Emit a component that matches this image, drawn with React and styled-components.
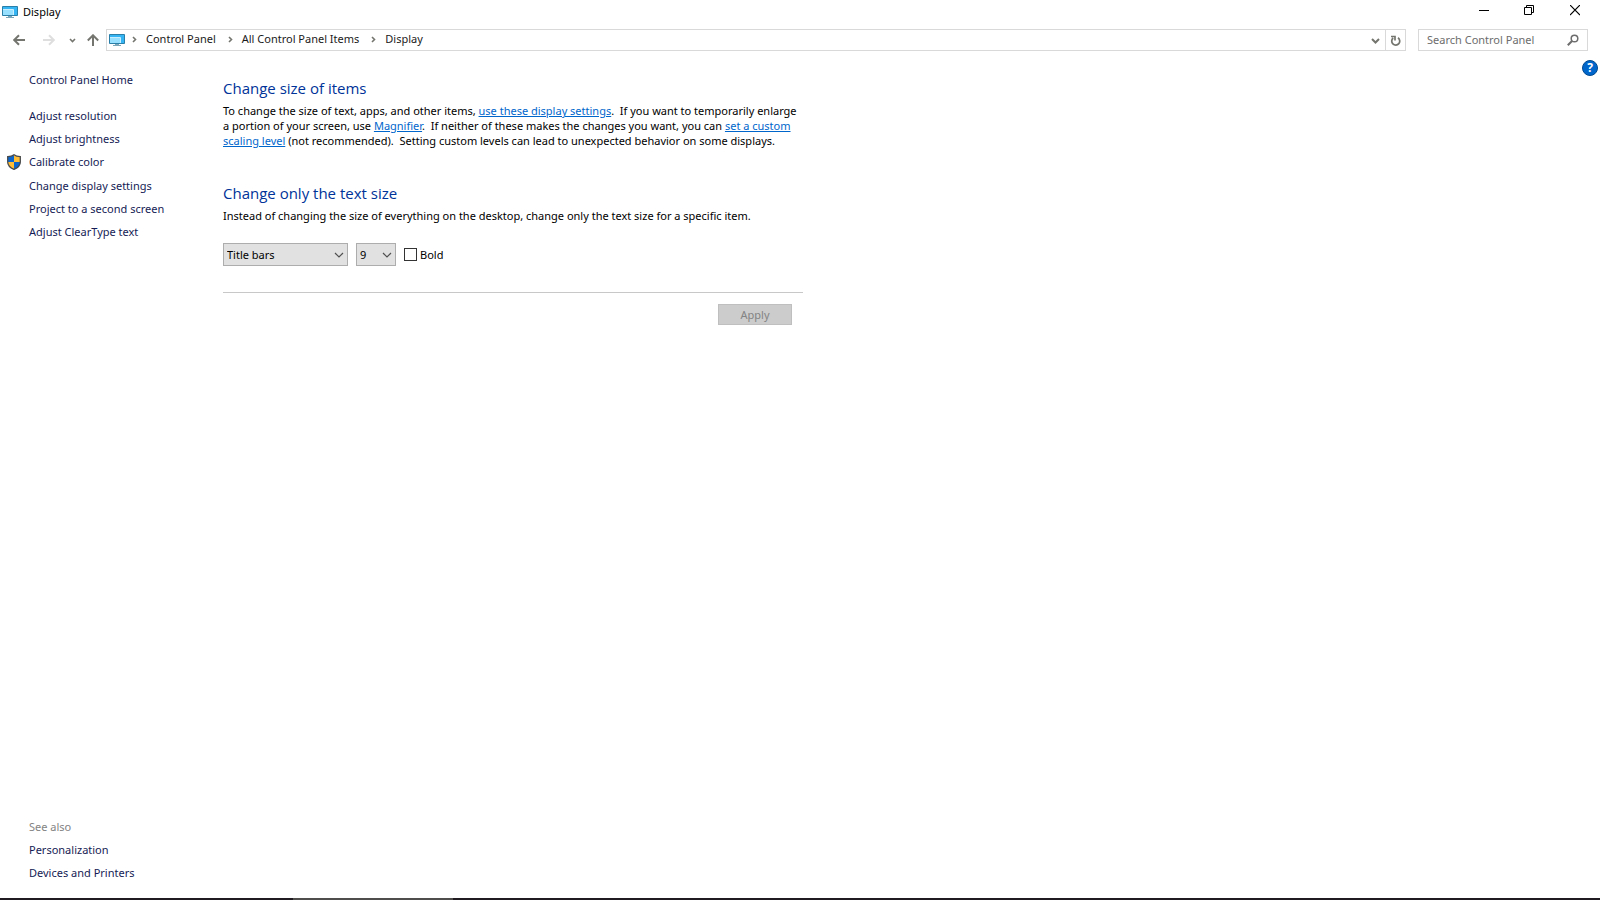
import { useState } from 'react';
import styled, { createGlobalStyle } from 'styled-components';

const GlobalStyle = createGlobalStyle`
    * {
        box-sizing: border-box;
    }

    body {
        margin: 0;
        background: #fff;
        color: #000;
        font: 11px/16px 'Noto Sans', 'Open Sans', sans-serif;
    }

    button, input, select {
        font: inherit;
        color: inherit;
    }
`;

const Window = styled.div`
    display: flex;
    flex-direction: column;
    min-height: 100vh;
`;

const TitleBar = styled.header`
    display: flex;
    align-items: center;
    height: 24px;
    padding: 0 2px;
`;

const Title = styled.h1`
    flex: 1;
    margin: 0 0 0 5px;
    font-size: 11px;
    font-weight: 400;
`;

const IconButton = styled.button`
    display: flex;
    flex: none;
    align-items: center;
    justify-content: center;
    width: ${({ $width }) => $width}px;
    height: 20px;
    padding: 0;
    border: 0;
    background: transparent;
`;

const Toolbar = styled.nav`
    display: flex;
    align-items: center;
    height: 32px;
    padding: 0 12px 0 4px;
`;

const AddressBar = styled.div`
    display: flex;
    flex: 1;
    align-items: center;
    height: 22px;
    margin-left: 1px;
    padding-left: 2px;
    border: 1px solid #d9d9d9;
`;

const Crumbs = styled.ol`
    display: flex;
    flex: 1;
    margin: 0;
    padding: 0 0 2px;
    list-style: none;
`;

const Crumb = styled.li`
    display: flex;
    align-items: center;

    svg {
        margin: 0 9px 0 7px;
    }

    & + & svg {
        margin-left: 12px;
    }

    a {
        color: #1a1a1a;
        text-decoration: none;
    }
`;

const Refresh = styled.div`
    height: 20px;
    border-left: 1px solid #d9d9d9;
`;

const SearchBox = styled.label`
    display: flex;
    align-items: center;
    width: 170px;
    height: 22px;
    margin-left: 12px;
    padding: 0 8px;
    border: 1px solid #d9d9d9;

    input {
        flex: 1;
        min-width: 0;
        padding: 0;
        border: 0;
        outline: 0;
        background: transparent;
    }

    input::placeholder {
        color: #6d6d6d;
        opacity: 1;
    }
`;

const Body = styled.div`
    display: flex;
    flex: 1;
`;

const Sidebar = styled.aside`
    display: flex;
    flex: none;
    flex-direction: column;
    width: 223px;
    padding: 12px 0 14px 6px;
`;

const LinkList = styled.ul`
    margin: ${({ $bottom }) => ($bottom ? 'auto 0 0' : '13px 0 0')};
    padding: 0;
    list-style: none;
`;

const SideItem = styled.div`
    display: flex;
    align-items: center;
    height: ${({ $tall }) => ($tall ? 24 : 23)}px;
    color: #838383;

    a {
        color: #151c55;
        text-decoration: none;
    }
`;

const IconSlot = styled.span`
    display: flex;
    width: 23px;
`;

const Main = styled.main`
    width: 580px;
    padding-top: 21px;
`;

const Heading = styled.h2`
    margin: 0 0 4px;
    color: #003399;
    font-family: 'Open Sans', 'Noto Sans', sans-serif;
    font-size: 15px;
    font-weight: 400;
    line-height: 22px;
`;

const Text = styled.p`
    margin: 0 0 ${({ $gap }) => $gap}px;
    line-height: 15px;
    white-space: nowrap;

    a {
        color: #0066cc;
        text-decoration: underline;
    }
`;

const Options = styled.form`
    display: flex;
    flex-wrap: wrap;
    align-items: center;
    gap: 8px;
`;

const SelectBox = styled.div`
    display: grid;
    align-items: center;
    width: ${({ $width }) => $width}px;
    height: 23px;
    border: 1px solid #adadad;
    background: #e1e1e1;

    select,
    svg {
        grid-area: 1 / 1;
    }

    select {
        width: 100%;
        height: 21px;
        padding: 0 20px 0 3px;
        border: 0;
        appearance: none;
        background: transparent;
    }

    svg {
        justify-self: end;
        margin-right: 2px;
        pointer-events: none;
    }
`;

const Bold = styled.label`
    display: flex;
    align-items: center;
    gap: 3px;

    input {
        width: 13px;
        height: 13px;
        margin: 0;
        border: 1px solid #333;
        appearance: none;
        background: #fff;
    }

    input:checked {
        box-shadow: inset 0 0 0 2px #fff;
        background: #333;
    }
`;

const Actions = styled.div`
    display: flex;
    flex: 0 0 100%;
    justify-content: flex-end;
    margin-top: 18px;
    padding: 11px 11px 0 0;
    border-top: 1px solid #c8c8c8;
`;

const ApplyButton = styled.button`
    width: 74px;
    height: 21px;
    padding: 0;
    border: 1px solid #bfbfbf;
    background: #ccc;

    &:disabled {
        color: #838383;
    }
`;

const Help = styled.div`
    margin: 4px 2px 0 auto;
`;

const HelpButton = styled.button`
    width: 16px;
    height: 16px;
    padding: 0;
    border: 1px solid #00498f;
    border-radius: 50%;
    background: #0066cc;
    color: #fff;
    font-size: 12px;
    font-weight: 700;
    line-height: 14px;
`;

const Taskbar = styled.footer`
    height: 2px;
    padding-left: 293px;
    background: #1f1b20;
`;

const ActiveTask = styled.div`
    width: 160px;
    height: 2px;
    background: #504e4c;
`;

function MonitorIcon() {
    return (
        <svg width="16" height="12" viewBox="0 0 16 12" aria-hidden="true">
            <path fill="#35b4f4" stroke="#2a7fa8" d="M.5.5h15v9H.5z" />
            <path fill="#98e0ff" d="M1 4h10v5H1z" />
            <path fill="none" stroke="#c9efff" d="M1 3.5h10.5V9" />
            <path fill="#7ca7bb" d="M6 10h4v1H6zM4 11h8v1H4z" />
        </svg>
    );
}

const SHIELD = 'M8 .8C6 2.4 4 2.6 1.7 2.6V8c0 3.5 2.3 5.7 6.3 7.4 4-1.7 6.3-3.9 6.3-7.4V2.6C12 2.6 10 2.4 8 .8z';

function ShieldIcon() {
    return (
        <svg width="16" height="16" viewBox="0 0 16 16" aria-hidden="true">
            <path fill="#ffbd35" d={SHIELD} />
            <path fill="#0b65cb" d="M8 1C6 2.4 4 2.6 1.7 2.6V8H8zM8 8h6.3c0 3.5-2.3 5.7-6.3 7.4z" />
            <path fill="none" stroke="#494b4d" strokeWidth="1.3" d={SHIELD} />
        </svg>
    );
}

function LineIcon({ d, width = 12, height = 12, color = '#75756f', weight = 2 }) {
    return (
        <svg width={width} height={height} viewBox={`0 0 ${width} ${height}`} aria-hidden="true">
            <path d={d} fill="none" stroke={color} strokeWidth={weight} />
        </svg>
    );
}

const BACK = 'M12 6H1.5M6 1.2L1.2 6 6 10.8';
const FORWARD = 'M0 6h10.5M6 1.2L10.8 6 6 10.8';
const UP = 'M6 12V1.5M.8 6.5L6 1.3l5.2 5.2';

const crumbs = ['Control Panel', 'All Control Panel Items', 'Display'];

const tasks = [
    { label: 'Adjust resolution' },
    { label: 'Adjust brightness' },
    { label: 'Calibrate color', shield: true },
    { label: 'Change display settings' },
    { label: 'Project to a second screen' },
    { label: 'Adjust ClearType text' },
];

function SideLink({ label, shield }) {
    return (
        <SideItem $tall={shield}>
            <IconSlot>{shield && <ShieldIcon />}</IconSlot>
            <a href="#">{label}</a>
        </SideItem>
    );
}

function Select({ label, width, value, onChange, options }) {
    return (
        <SelectBox $width={width}>
            <select aria-label={label} value={value} onChange={(e) => onChange(e.target.value)}>
                {options.map((option) => (
                    <option key={option}>{option}</option>
                ))}
            </select>
            <LineIcon d="M2 4l4 4 4-4" color="#505050" weight={1.2} />
        </SelectBox>
    );
}

function App() {
    const [item, setItem] = useState('Title bars');
    const [size, setSize] = useState('9');

    return (
        <>
            <GlobalStyle />
            <Window>
                <TitleBar>
                    <MonitorIcon />
                    <Title>Display</Title>
                    <IconButton $width={45} aria-label="Minimize">
                        <LineIcon d="M0 5.5h10" width={10} height={14} color="#000" weight={1} />
                    </IconButton>
                    <IconButton $width={45} aria-label="Restore">
                        <LineIcon d="M.5 2.5h7v7h-7zM2.5 2.5v-2h7v7h-2" width={10} height={14} color="#000" weight={1} />
                    </IconButton>
                    <IconButton $width={47} aria-label="Close">
                        <LineIcon d="M0 0l10 10M10 0L0 10" width={10} height={14} color="#000" weight={1.2} />
                    </IconButton>
                </TitleBar>

                <Toolbar>
                    <IconButton $width={30} aria-label="Back">
                        <LineIcon d={BACK} />
                    </IconButton>
                    <IconButton $width={30} aria-label="Forward">
                        <LineIcon d={FORWARD} color="#dedede" />
                    </IconButton>
                    <IconButton $width={17} aria-label="Recent locations">
                        <LineIcon d="M1 1l2.5 2.5L6 1" width={7} height={5} weight={1.6} />
                    </IconButton>
                    <IconButton $width={24} aria-label="Up">
                        <LineIcon d={UP} />
                    </IconButton>
                    <AddressBar>
                        <MonitorIcon />
                        <Crumbs>
                            {crumbs.map((crumb) => (
                                <Crumb key={crumb}>
                                    <LineIcon d="M1 1l2.5 2.5L1 6" width={5} height={7} weight={1.6} />
                                    <a href="#">{crumb}</a>
                                </Crumb>
                            ))}
                        </Crumbs>
                        <IconButton $width={19} aria-label="Previous locations">
                            <LineIcon d="M1 2l3.5 3.5L8 2" width={9} height={7} />
                        </IconButton>
                        <Refresh>
                            <IconButton $width={19} aria-label="Refresh">
                                <LineIcon d="M8 2.8A4 4 0 1 1 3.2 3M1 1.5h4v4" width={11} height={11} weight={1.7} />
                            </IconButton>
                        </Refresh>
                    </AddressBar>
                    <SearchBox>
                        <input type="text" aria-label="Search" placeholder="Search Control Panel" />
                        <svg width="12" height="12" viewBox="0 0 12 12" aria-hidden="true">
                            <circle cx="7.5" cy="4.5" r="3.3" fill="none" stroke="#6d6d6d" strokeWidth="1.5" />
                            <path d="M5 7L.8 11.2" stroke="#6d6d6d" strokeWidth="2" />
                        </svg>
                    </SearchBox>
                </Toolbar>

                <Body>
                    <Sidebar>
                        <SideLink label="Control Panel Home" />
                        <LinkList>
                            {tasks.map((task) => (
                                <li key={task.label}>
                                    <SideLink {...task} />
                                </li>
                            ))}
                        </LinkList>
                        <LinkList $bottom>
                            <li>
                                <SideItem>
                                    <IconSlot />
                                    See also
                                </SideItem>
                            </li>
                            <li><SideLink label="Personalization" /></li>
                            <li><SideLink label="Devices and Printers" /></li>
                        </LinkList>
                    </Sidebar>

                    <Main>
                        <Heading>Change size of items</Heading>
                        <Text $gap={34}>
                            To change the size of text, apps, and other items, <a href="#">use these display settings</a>.&nbsp; If you want to temporarily enlarge
                            <br />
                            a portion of your screen, use <a href="#">Magnifier</a>.&nbsp; If neither of these makes the changes you want, you can <a href="#">set a custom<br />
                            scaling level</a> (not recommended).&nbsp; Setting custom levels can lead to unexpected behavior on some displays.
                        </Text>

                        <Heading>Change only the text size</Heading>
                        <Text $gap={20}>
                            Instead of changing the size of everything on the desktop, change only the text size for a specific item.
                        </Text>

                        <Options>
                            <Select
                                label="Item"
                                width={125}
                                value={item}
                                onChange={setItem}
                                options={['Title bars', 'Menus', 'Message boxes', 'Palette titles', 'Icons', 'Tooltips']}
                            />
                            <Select
                                label="Text size"
                                width={40}
                                value={size}
                                onChange={setSize}
                                options={['6', '7', '8', '9', '10', '11', '12']}
                            />
                            <Bold>
                                <input type="checkbox" />
                                Bold
                            </Bold>
                            <Actions>
                                <ApplyButton disabled>Apply</ApplyButton>
                            </Actions>
                        </Options>
                    </Main>

                    <Help>
                        <HelpButton aria-label="Help">?</HelpButton>
                    </Help>
                </Body>

                <Taskbar>
                    <ActiveTask />
                </Taskbar>
            </Window>
        </>
    );
}

export default App;
